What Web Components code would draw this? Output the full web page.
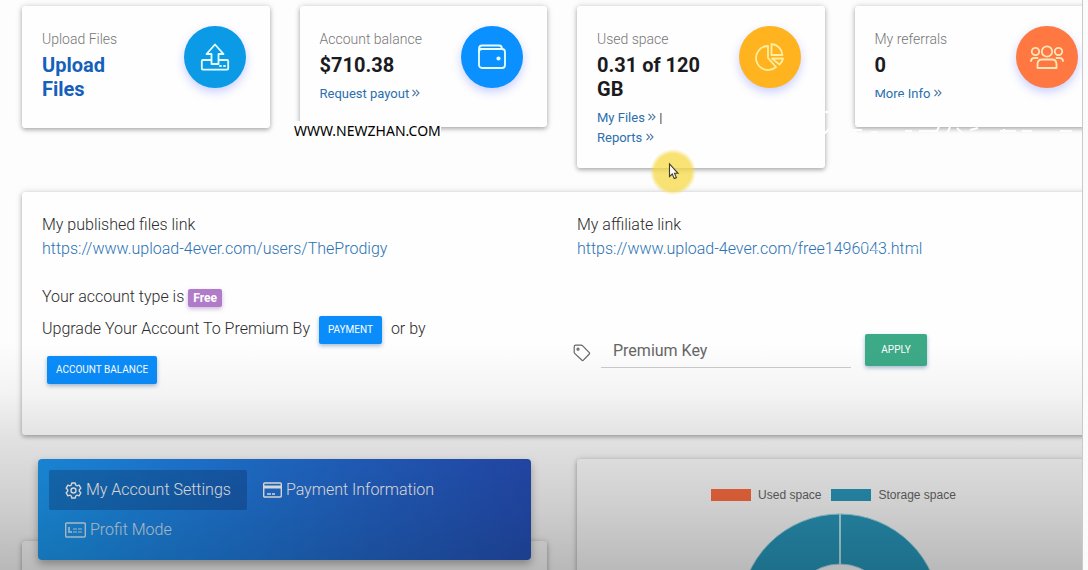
<!DOCTYPE html>
<html lang="en">
<head>
<meta charset="utf-8">
<title>Account dashboard</title>
<style>
html,body{margin:0;height:100%;background:#fbfbfb;overflow:hidden}
body{font-family:Roboto,"Liberation Sans",sans-serif;color:#444}
</style>
</head>
<body>
<account-dashboard></account-dashboard>
<script>
const define = (name, html) => customElements.define(name, class extends HTMLElement {
  constructor() {
    super();
    this.attachShadow({mode: "open"}).innerHTML = html;
  }
});

/* White raised surface */
define("surface-card", `
<style>
:host{display:block;box-sizing:border-box;background:#fefefe;border-radius:3px;padding:20px;box-shadow:0 2px 4px rgba(0,0,0,.26),0 0 7px rgba(0,0,0,.14)}
</style><slot></slot>`);

/* Summary card: label, value, links and a round icon */
define("stat-card", `
<style>
:host{display:block;min-width:0}
surface-card{display:flex;justify-content:space-between;min-height:121px;padding-right:24px}
.text{padding-top:1px;width:108px}
.label{font-size:14px;line-height:24px;font-weight:300;color:#777;white-space:nowrap}
.value{margin:0;padding-top:2px;font-size:20px;line-height:24px;font-weight:700;color:#1b1b1f}
.value ::slotted(a){color:#1560ba;text-decoration:none}
.links{padding-top:7px;font-size:13px;line-height:20px;color:#444}
.icon{width:62px;height:62px;border-radius:50%;background:var(--tone);display:grid;place-items:center;flex:none;box-shadow:0 4px 10px rgba(90,110,255,.32)}
</style>
<surface-card>
<div class="text"><div class="label"><slot name="label"></slot></div><h2 class="value"><slot name="value"></slot></h2><div class="links"><slot></slot></div></div>
<div class="icon"><slot name="icon"></slot></div>
</surface-card>`);

/* Text link with an optional double chevron */
customElements.define("text-link", class extends HTMLElement {
  constructor() {
    super();
    const more = this.hasAttribute("more")
      ? ' <svg width="8" height="8" viewBox="0 0 8 8" fill="none" stroke="#557da5" stroke-width="1.2"><path d="M.5 .8 3.5 4 .5 7.2M4 .8 7 4 4 7.2"/></svg>' : "";
    this.attachShadow({mode: "open"}).innerHTML =
      `<style>:host{display:inline}a{color:var(--link,#2b6fae);text-decoration:none;white-space:nowrap}svg{vertical-align:1px}</style><a href="#"><slot></slot>${more}</a>`;
  }
});

define("raised-button", `
<style>
:host{display:inline-block;vertical-align:middle}
button{display:block;font:400 10px/12px Roboto,sans-serif;color:#fff;background:var(--fill,#0a8dfb);border:0;border-radius:2px;padding:8px 9px;height:var(--height,28px);min-width:62px;white-space:nowrap;box-shadow:0 2px 4px rgba(0,60,130,.35)}
</style><button type="button"><slot></slot></button>`);

define("key-form", `
<style>
:host{display:block}
form{display:flex;align-items:flex-start;margin:0}
label{display:block;width:24px;padding-top:10px;margin-left:-4px}
svg{display:block}
input{box-sizing:border-box;width:250px;height:34px;border:0;border-bottom:1px solid #ccc;background:none;padding:0 12px;font:400 16px/24px Roboto,sans-serif;color:#555;outline:0}
input::placeholder{color:#666;opacity:1}
raised-button{--fill:#3daa87;--height:32px;margin-left:14px}
label+input{margin-left:4px}
</style>
<form>
<label for="key" aria-label="Premium Key"><svg width="18" height="18" viewBox="0 0 18 18" fill="none" stroke="#666" stroke-width="1.2" stroke-linejoin="round"><path d="M1.2 2.8Q1.2 1.2 2.8 1.2H8.2Q9 1.2 9.7 1.9L16.3 8.6Q17 9.3 16.3 10L10.4 16.2Q9.7 16.9 9 16.2L1.9 9.6Q1.2 9 1.2 8.2Z"/><circle cx="5" cy="5.2" r="1"/></svg></label>
<input id="key" type="text" placeholder="Premium Key">
<raised-button>APPLY</raised-button>
</form>`);

define("account-panel", `
<style>
:host{display:block;font-size:16px;line-height:24px;font-weight:300;color:#2c2c2c;--link:#2a72b4}
surface-card{display:grid;grid-template-columns:1fr 1fr;gap:30px;min-height:243px;padding-top:21px}
p{margin:0}
.type{margin-top:24px}
.badge{display:inline-block;vertical-align:middle;font:700 12px/18px Roboto,sans-serif;color:#fff;background:#b07cc9;border-radius:2px;padding:0 5px;box-shadow:0 2px 4px rgba(120,60,150,.35)}
.upgrade{line-height:40px}
.upgrade raised-button{margin:0 5px}
key-form{margin-top:73px}
</style>
<surface-card>
<section>
<p>My published files link</p><p><text-link>https://www.upload-4ever.com/users/TheProdigy</text-link></p>
<p class="type">Your account type is <span class="badge">Free</span></p>
<p class="upgrade">Upgrade Your Account To Premium By <raised-button>PAYMENT</raised-button> or by <raised-button>ACCOUNT BALANCE</raised-button></p>
</section>
<section>
<p>My affiliate link</p><p><text-link>https://www.upload-4ever.com/free1496043.html</text-link></p>
<key-form></key-form>
</section>
</surface-card>`);

define("settings-nav", `
<style>
:host{display:block;padding-top:82px}
surface-card{padding:0 16px;height:120px}
nav{box-sizing:border-box;height:101px;padding:11px;background:linear-gradient(72deg,#1c9df5,#2080e4 35%,#2468cf 65%,#264fba);border-radius:4px;display:flex;flex-wrap:wrap;align-content:flex-start;transform:translateY(-82px);box-shadow:0 4px 8px rgba(0,0,0,.3)}
a{display:flex;align-items:center;gap:4px;height:40px;box-sizing:border-box;padding:0 16px;font-size:16px;line-height:24px;font-weight:300;color:#fff;text-decoration:none;border-radius:2px}
a.on{background:rgba(10,50,110,.33)}
a.dim{opacity:.8}
svg{fill:none;stroke:#fff;stroke-width:1.4}
</style>
<surface-card><nav aria-label="Account sections">
<a class="on" href="#"><svg width="17" height="17" viewBox="0 0 17 17" stroke-linejoin="round"><path d="M6.8 1H10.2L10.7 3 12.1 3.8 14.1 3.2 15.8 6.2 14.3 7.7V9.3L15.8 10.8 14.1 13.8 12.1 13.2 10.7 14 10.2 16H6.8L6.3 14 4.9 13.2 2.9 13.8 1.2 10.8 2.7 9.3V7.7L1.2 6.2 2.9 3.2 4.9 3.8 6.3 3Z"/><circle cx="8.5" cy="8.5" r="2.5"/></svg>My Account Settings</a>
<a href="#"><svg width="19" height="16" viewBox="0 0 19 16"><rect x=".7" y="1" width="17.6" height="14" rx="1"/><path d="M1 5H18" stroke-width="3"/><path d="M4 12H8M9 12H12"/></svg>Payment Information</a>
<a class="dim" href="#"><svg width="21" height="16" viewBox="0 0 21 16"><rect x=".7" y="1" width="19.6" height="14" rx="1"/><path d="M4 5V11M6 9V11" stroke-width="1.6"/><path d="M8 7H12M13 7H17M8 10H12M13 10H17" stroke-width="1"/></svg>Profit Mode</a>
</nav></surface-card>`);

define("space-chart", `
<style>
:host{display:block}
surface-card{min-height:300px;padding:28px 20px}
ul{display:flex;justify-content:center;gap:10px;margin:0;padding:0 12px 0 0;list-style:none;font:400 12px/16px "Liberation Sans",sans-serif;color:#666}
li{display:flex;align-items:center;gap:7px}
i{width:40px;height:12px;background:var(--c)}
svg{display:block;margin:10px auto 0}
</style>
<surface-card>
<ul><li style="--c:#ff6e40"><i></i>Used space</li><li style="--c:#2999bd"><i></i>Storage space</li></ul>
<svg width="202" height="202" viewBox="0 0 202 202" role="img" aria-label="Storage chart"><circle cx="101" cy="101" r="75" fill="none" stroke="#2999bd" stroke-width="50"/><circle cx="101" cy="101" r="100" fill="none" stroke="#9cdce5" stroke-width="1"/><circle cx="101" cy="101" r="50" fill="none" stroke="#9cdce5" stroke-width="1"/><path d="M101 1V51" stroke="#b4e4ea" stroke-width="2"/></svg>
</surface-card>`);

/* Highlighted pointer of the screencast */
define("screen-pointer", `
<style>:host{position:absolute;left:650px;top:148px;pointer-events:none}svg{display:block}</style>
<svg width="48" height="48" viewBox="0 0 48 48"><defs><radialGradient id="g"><stop offset=".8" stop-color="#f5d83e" stop-opacity=".72"/><stop offset="1" stop-color="#f5d83e" stop-opacity="0"/></radialGradient></defs><circle cx="23" cy="24" r="23" fill="url(#g)"/><path d="M19.5 16V28.5L22.3 26 24.2 30.6 26.4 29.6 24.5 25.3H28Z" fill="#fff" stroke="#443b28" stroke-width="1.1"/></svg>`);

/* Faint white strokes that cross the text and card edges */
define("ghost-marks", `
<style>:host{position:absolute;left:820px;top:84px;pointer-events:none}svg{display:block}</style>
<svg width="270" height="176" viewBox="0 0 270 176" fill="none" stroke="#fdfdfd" stroke-width="2"><path d="M54 5H64M79 6H89M113 4H123M54 14H62M77 14H84M113 15H123M3 13V20M0 28H9M2 52 9 45M30 46H42M35 45V50M51 48H57M85 47H92M99 47H116M119 43 115 50M130 43 127 50M137 44 143 50M150 46 158 44M180 47H196M184 45V50M202 47H212M240 47H252"/><path stroke-width="1" d="M-20 158 -13 170M38 161H48M51 166H62M84 159V170M91 164H100"/></svg>`);

define("account-dashboard", `
<style>
:host{display:block;height:100%;position:relative;overflow:hidden}
.frame{height:100%;box-sizing:border-box;margin-right:5px;border-right:1px solid #c9c9cb;background:#fdfdfd;position:relative;overflow:hidden;padding:6px 0 0 22px}
/* the content column runs past the right edge of the frame */
main{margin-right:-20px;display:grid;gap:24px}
.stats{display:grid;grid-template-columns:repeat(4,1fr);gap:30px;align-items:start}
.lower{display:grid;grid-template-columns:1fr 1fr;gap:30px;align-items:start}
.shade{position:absolute;inset:60% 0 0;background:linear-gradient(rgba(0,0,0,0),rgba(0,0,0,.04) 22%,rgba(0,0,0,.11) 42%,rgba(0,0,0,.19) 73%,rgba(0,0,0,.27));pointer-events:none}
.site{position:absolute;left:294px;top:121px;font:400 14px/20px "Noto Sans","Open Sans",sans-serif;color:#000;background:#fdfdfd;white-space:nowrap}
svg{fill:none;stroke:#e9ffff;stroke-width:1.8;stroke-linejoin:round;stroke-linecap:round}
</style>
<div class="frame">
<main>
<div class="stats">
<stat-card style="--tone:#0a9ae6"><span slot="label">Upload Files</span><a slot="value" href="#">Upload Files</a>
<svg slot="icon" width="30" height="30" viewBox="0 0 30 30"><path d="M11.5 22V12H6.5L15 2.5 23.5 12H18.5V22ZM11.5 18H3Q1.8 18 1.8 19.2V26.5Q1.8 27.7 3 27.7H27Q28.2 27.7 28.2 26.5V19.2Q28.2 18 27 18H18.5M20 24H21M24 24H25"/></svg></stat-card>
<stat-card style="--tone:#0a90ff"><span slot="label">Account balance</span><span slot="value">$710.38</span><text-link more>Request payout</text-link>
<svg slot="icon" width="30" height="30" viewBox="0 0 30 30"><rect x="2" y="7" width="26" height="19" rx="3"/><path d="M2 10V7Q2 3.5 5 3.5H22Q25 3.5 25 7H5Q3 7 2.2 5.5"/><circle cx="21.5" cy="16.5" r="1.2" fill="#e9ffff"/></svg></stat-card>
<stat-card style="--tone:#ffb31f"><span slot="label">Used space</span><span slot="value">0.31 of 120 GB</span><text-link more>My Files</text-link> | <text-link more>Reports</text-link>
<svg slot="icon" width="30" height="30" viewBox="0 0 30 30" style="stroke:#ffeda0"><path d="M13 4A12 12 0 1 0 21 25L13 16ZM16.5 2A12 12 0 0 1 27.5 13H16.5ZM17 16.5H28Q27.5 20 24.5 22.5Z"/></svg></stat-card>
<stat-card style="--tone:#ff7842"><span slot="label">My referrals</span><span slot="value">0</span><text-link more>More Info</text-link>
<svg slot="icon" width="34" height="30" viewBox="0 0 34 30" style="stroke:#ffe6b8"><circle cx="17" cy="9.5" r="5.2"/><circle cx="5.5" cy="9.5" r="3.7"/><circle cx="28.5" cy="9.5" r="3.7"/><path d="M7.5 26V22.5Q7.5 17.5 12 17.5H22Q26.5 17.5 26.5 22.5V26ZM1 19Q1.5 16 4 16H7.5M33 19Q32.5 16 30 16H26.5"/></svg></stat-card>
</div>
<account-panel></account-panel>
<div class="lower"><settings-nav></settings-nav><space-chart></space-chart></div>
</main>
<div class="shade"></div>
</div>
<span class="site">WWW.NEWZHAN.COM</span>
<ghost-marks></ghost-marks>
<screen-pointer></screen-pointer>`);
</script>
</body>
</html>
